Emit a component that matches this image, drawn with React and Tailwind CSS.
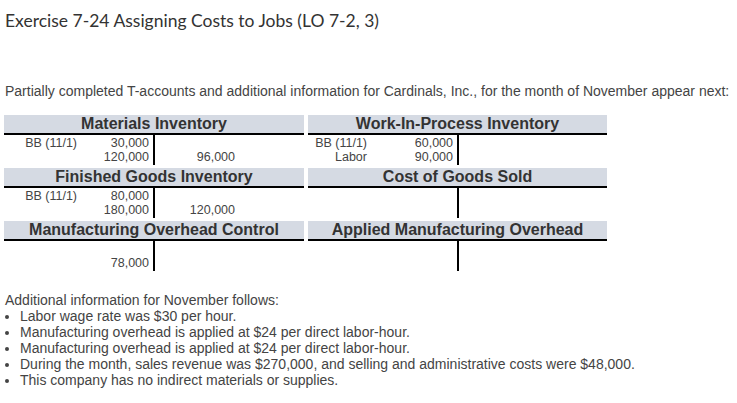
import React from "react";

const TAccount = ({ title, labelW = 75, rows = [], credits = [], last }) => (
  <div className={last ? "" : "mb-[3px]"}>
    <div className="h-[20px] bg-[#d5dae3] border-b-2 border-black text-center text-[16px] font-bold leading-[18px] text-[#333]">
      {title}
    </div>
    <div className="flex h-[30px] pt-[1px] text-[12.5px] leading-[14px] text-[#444]">
      <div className="w-[149px] flex">
        <div className="text-right" style={{ width: labelW }}>
          {rows.map((r, i) => (
            <div key={i} className="h-[14px]">{r[0]}</div>
          ))}
        </div>
        <div className="flex-1 text-right pr-[4px]">
          {rows.map((r, i) => (
            <div key={i} className="h-[14px]">{r[1]}</div>
          ))}
        </div>
      </div>
      <div className="flex-1 border-l-2 border-black -mt-[1px] pt-[1px]">
        <div className="w-[80px] text-right">
          {credits.map((c, i) => (
            <div key={i} className="h-[14px]">{c}</div>
          ))}
        </div>
      </div>
    </div>
  </div>
);

export default function App() {
  return (
    <div className="w-[737px] h-[403px] bg-white pl-[5px] pt-[10px] text-[#333]" style={{ fontFamily: "Arial, 'Liberation Sans', sans-serif" }}>
      <h1 className="text-[17.5px] leading-[22px] text-[#333]" style={{ fontFamily: "Lato, sans-serif" }}>
        Exercise 7-24 Assigning Costs to Jobs (LO 7-2, 3)
      </h1>
      <p className="mt-[51px] text-[14px] leading-[16px] text-[#444]">
        Partially completed T-accounts and additional information for Cardinals, Inc., for the month of November appear next:
      </p>
      <div className="mt-[16px] -ml-[1px] grid grid-cols-[300px_299px] gap-x-[4px]">
        <div>
          <TAccount
            title="Materials Inventory"
            labelW={73}
            rows={[["BB (11/1)", "30,000"], ["", "120,000"]]}
            credits={["", "96,000"]}
          />
          <TAccount
            title="Finished Goods Inventory"
            labelW={73}
            rows={[["BB (11/1)", "80,000"], ["", "180,000"]]}
            credits={["", "120,000"]}
          />
          <TAccount
            title="Manufacturing Overhead Control"
            labelW={73}
            rows={[["", ""], ["", "78,000"]]}
            last
          />
        </div>
        <div>
          <TAccount
            title="Work-In-Process Inventory"
            labelW={59}
            rows={[["BB (11/1)", "60,000"], ["Labor", "90,000"]]}
          />
          <TAccount title="Cost of Goods Sold" labelW={59} rows={[["", ""], ["", ""]]} />
          <TAccount title="Applied Manufacturing Overhead" labelW={59} rows={[["", ""], ["", ""]]} last />
        </div>
      </div>
      <div className="mt-[21px] text-[14px] leading-[16px] text-[#444]">
        <p>Additional information for November follows:</p>
        <ul className="list-disc pl-[15px]">
          <li>Labor wage rate was $30 per hour.</li>
          <li>Manufacturing overhead is applied at $24 per direct labor-hour.</li>
          <li>Manufacturing overhead is applied at $24 per direct labor-hour.</li>
          <li>During the month, sales revenue was $270,000, and selling and administrative costs were $48,000.</li>
          <li>This company has no indirect materials or supplies.</li>
        </ul>
      </div>
    </div>
  );
}
